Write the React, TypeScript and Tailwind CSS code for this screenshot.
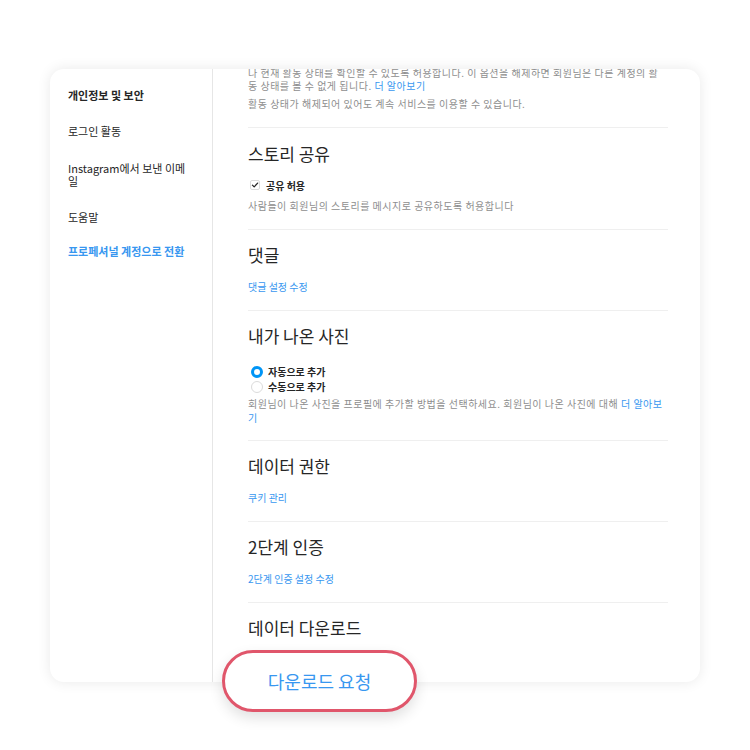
const font = { fontFamily: '"Noto Sans CJK KR", "Noto Sans", sans-serif' };

const navItems = [
  { label: '개인정보 및 보안', active: true },
  { label: '로그인 활동' },
  { label: 'Instagram에서 보낸 이메\n일' },
  { label: '도움말' },
  { label: '프로페셔널 계정으로 전환', blue: true },
];

function Divider() {
  return <div className="h-px bg-[#efefef]" />;
}

function Heading({ children }: { children: React.ReactNode }) {
  return <h2 className="text-[17px] leading-[24px] text-[#262626] font-normal">{children}</h2>;
}

function LinkSection({ title, link }: { title: string; link: string }) {
  return (
    <section className="pt-[13px] pb-[16px]">
      <Heading>{title}</Heading>
      <a className="mt-[13px] block text-[10px] leading-[14px] text-[#3897f0]">{link}</a>
    </section>
  );
}

export default function App() {
  return (
    <div className="relative min-h-[750px] bg-white pt-[69px]" style={font}>
      <div className="ml-[50px] flex h-[613px] w-[650px] overflow-hidden rounded-[14px] bg-white shadow-[0_0_14px_rgba(0,0,0,0.09)]">
        <nav className="w-[163px] shrink-0 border-r border-[#e6e6e6] pl-[18px] pr-[14px] pt-[19px]">
          {navItems.map((item, i) => (
            <div
              key={item.label}
              className={`whitespace-pre-line text-[11px] ${
                i === 0 ? '' : i === 2 ? 'mt-[24px] leading-[13px]' : i === 4 ? 'mt-[20px]' : 'mt-[22px]'
              } ${i === 2 ? '' : 'leading-[14px]'} ${
                item.active ? 'font-bold text-[#262626]' : item.blue ? 'text-[10.5px] font-semibold text-[#3897f0]' : 'text-[#262626]'
              }`}
            >
              {item.label}
            </div>
          ))}
        </nav>

        <main className="flex-1 overflow-hidden pl-[35px] pr-[32px]">
          <div className="-mt-[3px] pb-[17px] text-[10px] tracking-[0.5px] text-[#8e8e8e]">
            <p className="leading-[13px] whitespace-nowrap">
              나 현재 활동 상태를 확인할 수 있도록 허용합니다. 이 옵션을 해제하면 회원님은 다른 계정의 활
              <br />동 상태를 볼 수 없게 됩니다. <a className="text-[#3897f0]">더 알아보기</a>
            </p>
            <p className="mt-[5px] leading-[13px]">활동 상태가 해제되어 있어도 계속 서비스를 이용할 수 있습니다.</p>
          </div>
          <Divider />

          <section className="pt-[14px] pb-[16px]">
            <Heading>스토리 공유</Heading>
            <label className="mt-[12px] flex h-[14px] items-center gap-[6px] pl-[2px]">
              <span className="flex h-[10px] w-[10px] items-center justify-center rounded-[2px] border border-[#dbdbdb] bg-white">
                <svg viewBox="0 0 10 10" className="h-[8px] w-[8px]">
                  <path d="M1.8 5.2 L4 7.3 L8.3 2.6" fill="none" stroke="#262626" strokeWidth="1.6" strokeLinecap="round" strokeLinejoin="round" />
                </svg>
              </span>
              <span className="text-[10px] font-semibold text-[#262626]">공유 허용</span>
            </label>
            <p className="mt-[7px] text-[10px] leading-[14px] tracking-[0.5px] text-[#8e8e8e]">
              사람들이 회원님의 스토리를 메시지로 공유하도록 허용합니다
            </p>
          </section>
          <Divider />

          <LinkSection title="댓글" link="댓글 설정 수정" />
          <Divider />

          <section className="pt-[13px] pb-[15px]">
            <Heading>내가 나온 사진</Heading>
            <div className="mt-[16px] flex flex-col">
              <label className="flex h-[15px] items-center gap-[5px] pl-[3px]">
                <span className="h-[12px] w-[12px] rounded-full border-[3.5px] border-[#0095f6] bg-white" />
                <span className="text-[10px] font-semibold text-[#262626]">자동으로 추가</span>
              </label>
              <label className="flex h-[15px] items-center gap-[5px] pl-[3px]">
                <span className="h-[12px] w-[12px] rounded-full border border-[#dbdbdb] bg-white" />
                <span className="text-[10px] font-semibold text-[#262626]">수동으로 추가</span>
              </label>
            </div>
            <p className="mt-[3px] whitespace-nowrap text-[10px] leading-[14px] tracking-[0.5px] text-[#8e8e8e]">
              회원님이 나온 사진을 프로필에 추가할 방법을 선택하세요. 회원님이 나온 사진에 대해{' '}
              <a className="text-[#3897f0]">
                더 알아보
                <br />기
              </a>
            </p>
          </section>
          <Divider />

          <LinkSection title="데이터 권한" link="쿠키 관리" />
          <Divider />

          <LinkSection title="2단계 인증" link="2단계 인증 설정 수정" />
          <Divider />

          <section className="pt-[13px]">
            <Heading>데이터 다운로드</Heading>
          </section>
        </main>
      </div>

      <button
        type="button"
        className="absolute left-[222px] top-[650px] flex h-[62px] w-[195px] items-center justify-center rounded-full border-[3px] border-[#e0566b] bg-white text-[18px] text-[#3897f0] shadow-[0_6px_14px_rgba(0,0,0,0.12)]"
      >
        다운로드 요청
      </button>
    </div>
  );
}
